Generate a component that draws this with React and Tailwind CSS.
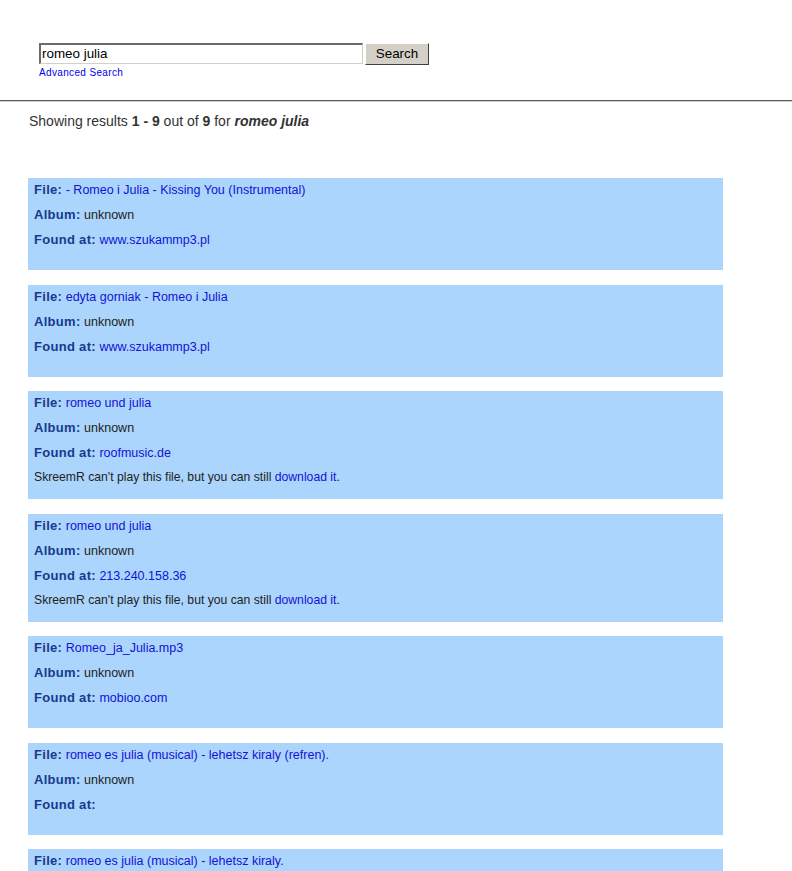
import React from 'react'

const results = [
  { file: '- Romeo i Julia - Kissing You (Instrumental)', site: 'www.szukammp3.pl' },
  { file: 'edyta gorniak - Romeo i Julia', site: 'www.szukammp3.pl' },
  { file: 'romeo und julia', site: 'roofmusic.de', note: true },
  { file: 'romeo und julia', site: '213.240.158.36', note: true },
  { file: 'Romeo_ja_Julia.mp3', site: 'mobioo.com' },
  { file: 'romeo es julia (musical) - lehetsz kiraly (refren).', site: '' },
  { file: 'romeo es julia (musical) - lehetsz kiraly.', site: '' },
]

function Result({ file, site, note }) {
  return (
    <div className="w-[695px] bg-[#abd5fc] pt-[4px] pb-[13px] pl-[6px] text-[12.5px]">
      <div className="h-[25px] leading-[15px]">
        <span className="font-bold text-[#173a8e] text-[13px] tracking-[0.3px]">File:</span>{' '}
        <a className="text-[#1212d8]">{file}</a>
      </div>
      <div className="h-[25px] leading-[15px]">
        <span className="font-bold text-[#173a8e] text-[13px] tracking-[0.3px]">Album:</span>{' '}
        <span className="text-[#222]">unknown</span>
      </div>
      <div className="h-[25px] leading-[15px]">
        <span className="font-bold text-[#173a8e] text-[13px] tracking-[0.3px]">Found at:</span>{' '}
        <a className="text-[#1212d8]">{site}</a>
      </div>
      {note && (
        <div className="h-[16px] leading-[14px] text-[12.2px] text-[#222]">
          SkreemR can't play this file, but you can still <a className="text-[#1212d8]">download it</a>.
        </div>
      )}
    </div>
  )
}

export default function App() {
  return (
    <div className="min-h-[871px] bg-white font-['Liberation_Sans',Arial,sans-serif]">
      <div className="pt-[43px] pl-[39px] h-[100px]">
        <div className="flex items-start gap-[2px]">
          <div className="w-[324px] h-[21px] border-t-2 border-l-2 border-t-[#6b6b6b] border-l-[#6b6b6b] border-b border-r border-b-[#d4d0c8] border-r-[#d4d0c8] bg-white pl-[1px] text-[13.4px] leading-[18px] text-black">
            romeo julia
          </div>
          <button className="w-[64px] h-[22px] bg-[#d4d0c8] border border-t-white border-l-white border-b-[#404040] border-r-[#404040] text-[13.4px] leading-[18px] text-black">
            Search
          </button>
        </div>
        <a className="block mt-[2px] text-[10px] leading-[12px] tracking-[0.35px] text-[#0000ee]">Advanced Search</a>
      </div>
      <div className="border-t border-t-[#5a5a5a] border-b border-b-[#d0d0d0]" />
      <p className="pl-[29px] pt-[10px] text-[14px] leading-[18px] text-[#333]">
        Showing results <b>1 - 9</b> out of <b>9</b> for <b><i>romeo julia</i></b>
      </p>
      <div className="pl-[28px] pt-[48px] flex flex-col gap-[14.5px]">
        {results.map((r, i) => (
          <Result key={i} {...r} />
        ))}
      </div>
    </div>
  )
}
